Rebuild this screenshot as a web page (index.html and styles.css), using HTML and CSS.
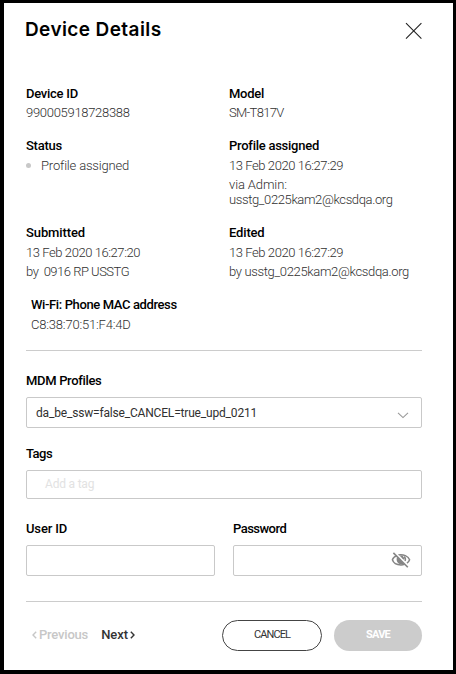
FILE: index.html
```
<!DOCTYPE html>
<html lang="en">
<head>
<meta charset="utf-8">
<title>Device Details</title>
<link rel="stylesheet" href="styles.css">
</head>
<body>
<main class="dialog">
  <header class="header">
    <h1 class="title">Device Details</h1>
    <button class="close" aria-label="Close">
      <svg width="18" height="18" viewBox="0 0 18 18"><path d="M2 1.2 17.4 16.6M17.4 1.2 2 16.6" fill="none" stroke="#222" stroke-width="1.1"/></svg>
    </button>
  </header>

  <section class="details">
    <div class="row row-id">
      <div><h2 class="label">Device ID</h2><p class="value serial">990005918728388</p></div>
      <div><h2 class="label">Model</h2><p class="value model">SM-T817V</p></div>
    </div>
    <div class="row row-status">
      <div><h2 class="label">Status</h2><p class="value spaced status"><span class="dot"></span>Profile assigned</p></div>
      <div>
        <h2 class="label">Profile assigned</h2>
        <p class="value spaced date">13 Feb 2020 16:27:29</p>
        <p class="value via">via Admin:</p>
        <p class="value admin">usstg_0225kam2@kcsdqa.org</p>
      </div>
    </div>
    <div class="row row-dates">
      <div><h2 class="label submitted">Submitted</h2><p class="value spaced date">13 Feb 2020 16:27:20</p><p class="value by">by&nbsp; 0916 RP USSTG</p></div>
      <div><h2 class="label edited">Edited</h2><p class="value spaced date">13 Feb 2020 16:27:29</p><p class="value editor">by usstg_0225kam2@kcsdqa.org</p></div>
    </div>
    <div class="mac"><h2 class="label mac-label">Wi-Fi: Phone MAC address</h2><p class="value spaced mac-value">C8:38:70:51:F4:4D</p></div>
  </section>

  <form class="form">
    <div class="field">
      <div class="label profiles">MDM Profiles</div>
      <div class="box select"><span>da_be_ssw=false_CANCEL=true_upd_0211</span>
        <svg width="12" height="7" viewBox="0 0 12 7"><path d="M1 .8 6 5.6 11 .8" fill="none" stroke="#999" stroke-width="1.1"/></svg>
      </div>
    </div>
    <div class="field field-tags">
      <div class="label tags">Tags</div>
      <div class="box tag-box"><span>Add a tag</span></div>
    </div>
    <div class="pair">
      <div><div class="label user">User ID</div><div class="box"></div></div>
      <div><div class="label password">Password</div>
        <div class="box secret">
          <svg width="20" height="17" viewBox="0 0 20 17">
            <g fill="none" stroke="#858585" stroke-width="1.5">
              <path d="M6.2 3.5C3.8 4.3 2 5.9 1.4 7.8c1 3.2 4.5 5.1 8.6 5.1 1.3 0 2.5-.2 3.6-.6"/>
              <path d="M7.3 2.9c5.1-.9 10 1.1 11.3 4.9-.5 1.4-1.4 2.5-2.7 3.4"/>
              <path d="M13.2 4.6c1.2 1.3 1.5 3 .8 4.4"/>
            </g>
            <path d="M6.2 4.7C5 7 5.4 11.8 10.2 12.2c1 .1 1.9-.2 2.6-.7Z" fill="#858585"/>
            <path d="M8.5 3.5h3l2.2 3.2-1.4 1Z" fill="#858585"/>
            <path d="M3.8.4 18.2 14.8" stroke="#fff" stroke-width="1.4"/>
            <path d="M2.4.9 16.8 15.3" stroke="#858585" stroke-width="1.6"/>
          </svg>
        </div>
      </div>
    </div>
  </form>

  <footer class="footer">
    <nav class="pager">
      <span class="previous"><svg width="5" height="8" viewBox="0 0 5 8"><path d="M4.2.7 1 4l3.2 3.3" fill="none" stroke="currentColor" stroke-width="1.4"/></svg>Previous</span>
      <span class="next">Next<svg width="5" height="8" viewBox="0 0 5 8"><path d="M.8.7 4 4 .8 7.3" fill="none" stroke="currentColor" stroke-width="1.4"/></svg></span>
    </nav>
    <button class="button cancel">CANCEL</button>
    <button class="button save">SAVE</button>
  </footer>
</main>
</body>
</html>
```
FILE: styles.css
```
* { box-sizing: border-box; }
body { margin: 0; background: #fff; font: 13px/19px Roboto, "Liberation Sans", sans-serif; color: #000; }
h1, h2, p { margin: 0; }
button { font: inherit; padding: 0; border: 0; background: none; }
svg { display: block; flex: none; }

.dialog { width: 456px; height: 674px; border: solid #000; border-width: 3px 3px 4px 4px; padding: 0 31px 0 22px; }
.header { display: flex; justify-content: space-between; height: 81px; padding-top: 14px; }
.title { margin-left: -1px; font: 600 19px/25px Inter, sans-serif; letter-spacing: .4px; }
.close { height: 18px; margin-top: 5px; }

.row { display: grid; grid-template-columns: 203px 1fr; }
.row-id { height: 52px; }
.row-status { height: 87px; }
.row-dates { height: 72px; }
.label { font-size: 13px; font-weight: 500; line-height: 19px; letter-spacing: -.26px; white-space: nowrap; }
.value { color: #303030; font-weight: 300; letter-spacing: -.34px; white-space: nowrap; }
.spaced { margin-top: 1px; }
.serial { letter-spacing: -.3px; }
.model { letter-spacing: -.7px; }
.status { display: flex; align-items: center; letter-spacing: -.18px; }
.dot { width: 5px; height: 5px; margin-right: 10px; border-radius: 50%; background: #c8c8c8; }
.date { letter-spacing: -.43px; }
.via { letter-spacing: -.12px; }
.admin { margin-top: -2px; line-height: 15px; letter-spacing: -.38px; }
.by { letter-spacing: -.5px; }
.submitted { letter-spacing: -.11px; }
.edited { letter-spacing: -.16px; }
.mac { height: 55px; padding-left: 5px; }
.mac-label { letter-spacing: -.38px; }
.mac-value { letter-spacing: -.19px; }

.form { height: 252px; border: solid #ccc; border-width: 1px 0; padding-top: 20px; }
.box { display: flex; align-items: center; height: 31px; margin-top: 7px; border: 1px solid #c9c9c9; border-radius: 2px; font-size: 12px; }
.profiles { letter-spacing: -.33px; }
.select { justify-content: space-between; padding: 1px 12px 0 9px; color: #303030; letter-spacing: -.18px; }
.select svg { margin-top: 4px; }
.field-tags { margin-top: 16px; }
.tags { letter-spacing: -.5px; }
.tag-box { height: 29px; padding: 0 18px; color: #e2e2e2; letter-spacing: -.2px; }
.pair { display: grid; grid-template-columns: 1fr 1fr; column-gap: 18px; margin-top: 20px; }
.user { letter-spacing: -.16px; }
.password { letter-spacing: -.53px; }
.secret { justify-content: flex-end; padding-right: 10px; }

.footer { display: flex; padding-top: 18px; }
.pager { display: flex; width: 196px; padding: 5px 0 0 6px; gap: 13px; font-weight: 500; }
.pager span { display: flex; align-items: center; height: 19px; }
.previous { color: #c7c7c7; gap: 2px; letter-spacing: -.2px; }
.next { color: #333; gap: 2px; }
.button { height: 31px; border-radius: 16px; font-size: 11px; padding-bottom: 3px; }
.cancel { width: 100px; border: 1px solid #444; color: #333; letter-spacing: -.9px; }
.save { width: 88px; margin-left: 12px; background: #ccc; color: #fff; font-weight: 700; letter-spacing: -.75px; }
```
